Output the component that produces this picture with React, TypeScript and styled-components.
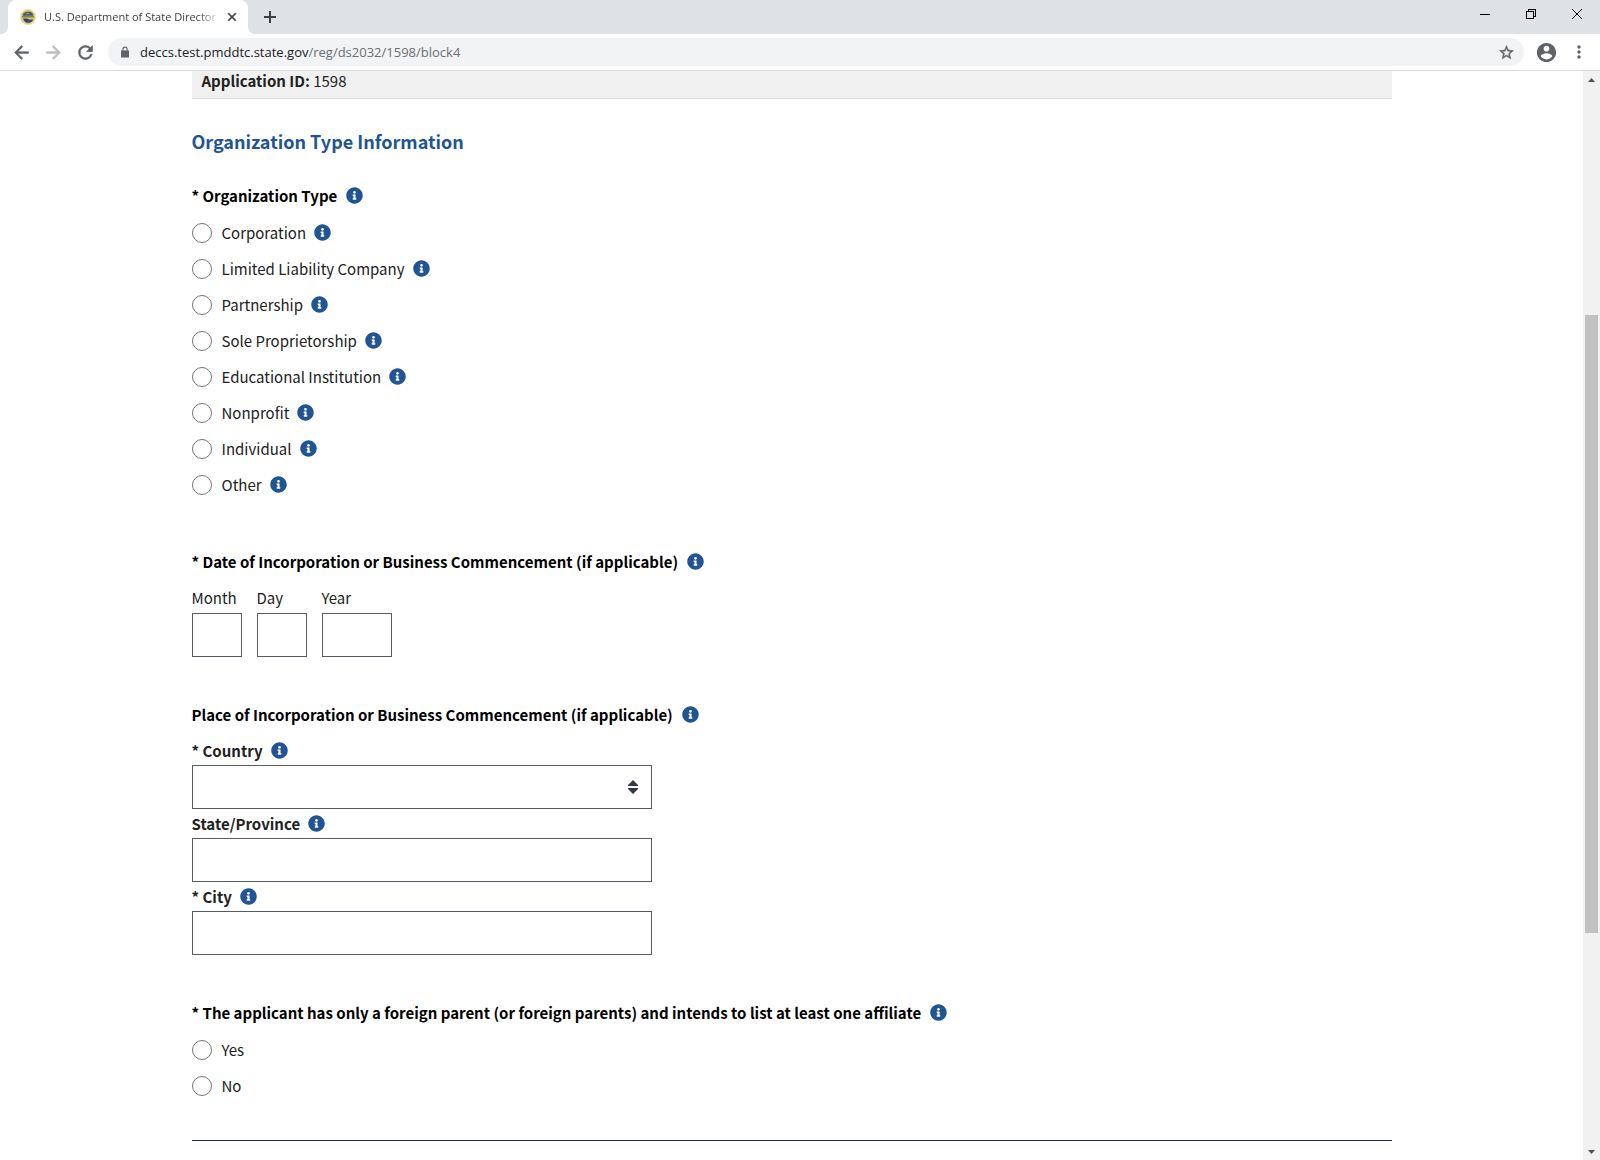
import React from "react";
import styled, { createGlobalStyle } from "styled-components";
import {
  MdArrowBack,
  MdArrowForward,
  MdRefresh,
  MdStarBorder,
  MdMoreVert,
  MdClose,
} from "react-icons/md";
import { FaInfoCircle } from "react-icons/fa";

const bodyFont = '"Noto Sans CJK SC", "Noto Sans", sans-serif';
const chromeFont = '"Open Sans", "Noto Sans", sans-serif';

const GlobalStyle = createGlobalStyle`
  *, *::before, *::after { box-sizing: border-box; }
  body { margin: 0; background: #fff; }
  button, input, select { font: inherit; color: inherit; }
`;

/* ---------- browser frame ---------- */

const Window = styled.div`
  display: flex;
  flex-direction: column;
  height: 100vh;
  font-family: ${bodyFont};
  font-size: 15px;
  line-height: 24px;
  color: #212121;
  overflow: hidden;
`;

const TabStrip = styled.header`
  display: flex;
  align-items: stretch;
  flex: none;
  height: 34px;
  padding-left: 8px;
  background: #dee1e6;
  font-family: ${chromeFont};
`;

const Tab = styled.div`
  position: relative;
  display: flex;
  align-items: center;
  width: 240px;
  padding: 0 8px 0 12px;
  border-radius: 8px 8px 0 0;
  background: #fff;

  &::before,
  &::after {
    content: "";
    position: absolute;
    bottom: 0;
    width: 8px;
    height: 8px;
  }
  &::before {
    left: -8px;
    background: radial-gradient(circle at 0 0, transparent 8px, #fff 8px);
  }
  &::after {
    right: -8px;
    background: radial-gradient(circle at 100% 0, transparent 8px, #fff 8px);
  }
`;

const TabTitle = styled.span`
  flex: 1;
  min-width: 0;
  margin: 0 4px 0 8px;
  overflow: hidden;
  white-space: nowrap;
  font-size: 11px;
  line-height: 16px;
  color: #3c4043;
  mask-image: linear-gradient(to right, #000 88%, transparent 100%);
`;

const IconButton = styled.button<{ $width: number; $color?: string }>`
  display: flex;
  align-items: center;
  justify-content: center;
  flex: none;
  width: ${(p) => p.$width}px;
  padding: 0;
  border: 0;
  background: none;
  color: ${(p) => p.$color ?? "#5f6368"};

  path[fill="none"] {
    stroke: none;
  }
`;

const NewTab = styled(IconButton)`
  margin-left: 8px;
`;

const WindowControls = styled.div`
  display: flex;
  height: 28px;
  margin-left: auto;
`;

const Toolbar = styled.nav`
  display: flex;
  align-items: stretch;
  flex: none;
  height: 37px;
  padding: 4px 5px;
  border-bottom: 1px solid #dcdcdc;
  background: #fff;
`;

const NavButton = styled(IconButton)`
  svg {
    stroke: currentColor;
    stroke-width: 0.6px;
  }
`;

const AddressBar = styled.div`
  display: flex;
  align-items: center;
  flex: 1;
  min-width: 0;
  height: 28px;
  margin: 0 5px 0 7px;
  padding: 0 8px 0 13px;
  border-radius: 14px;
  background: #f1f3f4;
  color: #5f6368;
  font-family: ${chromeFont};
`;

const Address = styled.span`
  flex: 1;
  margin-left: 11px;
  font-size: 13px;
  line-height: 20px;
  color: #6b6f73;
`;

const Host = styled.span`
  color: #202124;
`;

const Viewport = styled.div`
  display: flex;
  flex: 1;
  min-height: 0;
`;

const Scrollbar = styled.div`
  display: grid;
  grid-template-rows: 17px 227fr 618fr 210fr 17px;
  flex: none;
  width: 17px;
  background: #f1f1f1;
`;

const Thumb = styled.div`
  grid-row: 3;
  margin: 0 2px;
  background: #c1c1c1;
`;

const ScrollArrow = styled(IconButton)<{ $row: number }>`
  grid-row: ${(p) => p.$row};
`;

/* ---------- page ---------- */

const Page = styled.main`
  flex: 1;
  min-width: 0;
  overflow: hidden;
`;

const Content = styled.div`
  max-width: 1200px;
  margin: 0 auto;
`;

const ApplicationBar = styled.div`
  padding: 0 10px 7px;
  border-bottom: 1px solid #dcdee0;
  background: #f0f0f0;
  line-height: 20px;
`;

const Title = styled.h1`
  margin: 28px 0 0;
  font-size: 18px;
  line-height: 28px;
  font-weight: 700;
  color: #205493;
`;

const Form = styled.form`
  display: flex;
  flex-direction: column;
  gap: 46px;
  margin-top: 29px;
  padding-bottom: 35px;
  border-bottom: 1px solid #112e51;
`;

const Group = styled.fieldset`
  min-width: 0;
  margin: 0;
  padding: 0;
  border: 0;
`;

const Legend = styled.legend`
  display: flex;
  align-items: center;
  gap: 9px;
  padding: 0;
  font-weight: 700;
  color: #000;
`;

const InfoButton = styled.button`
  display: flex;
  padding: 0 0 2px;
  border: 0;
  background: none;
  color: #205493;
  font-size: 17px;
`;

const RadioList = styled.div`
  padding: 7px 0 1px;
`;

const RadioRow = styled.div`
  display: flex;
  align-items: center;
  gap: 8px;
  height: 36px;
`;

const RadioLabel = styled.label`
  display: flex;
  align-items: center;
  gap: 10px;
`;

const Radio = styled.input`
  appearance: none;
  width: 20px;
  height: 20px;
  margin: 0;
  border: 1px solid #757575;
  border-radius: 50%;
  background: #fff;

  &:checked {
    background: #205493;
    box-shadow: inset 0 0 0 3px #fff;
  }
`;

const Fields = styled.div`
  display: flex;
  padding-top: 12px;
`;

const DateFields = styled(Fields)`
  gap: 15px;
`;

const PlaceFields = styled(Fields)`
  flex-direction: column;
  gap: 3px;
  max-width: 460px;
`;

const DateLabel = styled.label`
  display: flex;
  flex-direction: column;
  gap: 3px;
`;

const LabelRow = styled.div`
  display: flex;
  align-items: center;
  gap: 8px;
  margin-bottom: 2px;
  font-weight: 700;
`;

const TextInput = styled.input<{ $width?: number }>`
  display: block;
  width: ${(p) => (p.$width ? `${p.$width}px` : "100%")};
  height: 44px;
  padding: 0 8px;
  border: 1px solid #565c65;
  border-radius: 0;
  background: #fff;
`;

const SelectBox = styled.div`
  position: relative;
`;

const Select = styled.select`
  display: block;
  appearance: none;
  width: 100%;
  height: 44px;
  padding: 0 40px 0 8px;
  border: 1px solid #565c65;
  border-radius: 0;
  background: #fff;
`;

const SelectArrows = styled.svg`
  position: absolute;
  top: 15px;
  right: 14px;
  pointer-events: none;
`;

/* ---------- parts ---------- */

function Info({ about }: { about: string }) {
  return (
    <InfoButton type="button" aria-label={`About ${about}`}>
      <FaInfoCircle />
    </InfoButton>
  );
}

function GroupLegend({ text, required }: { text: string; required?: boolean }) {
  return (
    <Legend>
      <span>{required ? `* ${text}` : text}</span>
      <Info about={text} />
    </Legend>
  );
}

function RadioOption({ name, text, info }: { name: string; text: string; info?: boolean }) {
  return (
    <RadioRow>
      <RadioLabel>
        <Radio type="radio" name={name} value={text} />
        {text}
      </RadioLabel>
      {info && <Info about={text} />}
    </RadioRow>
  );
}

function FieldHeading({ id, text, required }: { id: string; text: string; required?: boolean }) {
  return (
    <LabelRow>
      <label htmlFor={id}>{required ? `* ${text}` : text}</label>
      <Info about={text} />
    </LabelRow>
  );
}

function Seal() {
  return (
    <svg width="16" height="16" viewBox="0 0 16 16" aria-hidden="true">
      <circle cx="8" cy="8" r="8" fill="#ebe2a8" />
      <circle cx="8" cy="8" r="7" fill="#d9c95e" />
      <path d="M3.500 4.500 6 2.800h4.500L12.500 4.500l1 2.200h-11z" fill="#4a5478" />
      <path d="M2 7.200h12v1.200H2z" fill="#6d6c62" />
      <path d="M3 9.500h4.500l1 .9h4.700L12 12.500l-2.500 1.300H6.500L4.200 12z" fill="#34447c" />
      <path d="M6 4h3.500v1.200H6z" fill="#9a9670" />
    </svg>
  );
}

const organizationTypes = [
  "Corporation",
  "Limited Liability Company",
  "Partnership",
  "Sole Proprietorship",
  "Educational Institution",
  "Nonprofit",
  "Individual",
  "Other",
];

const dateParts = [
  { label: "Month", width: 50 },
  { label: "Day", width: 50 },
  { label: "Year", width: 70 },
];

export default function App() {
  return (
    <>
      <GlobalStyle />
      <Window>
        <TabStrip>
          <Tab>
            <Seal />
            <TabTitle>U.S. Department of State Director</TabTitle>
            <IconButton $width={16} $color="#3c4043" aria-label="Close tab">
              <MdClose size={14} stroke="currentColor" strokeWidth={1} />
            </IconButton>
          </Tab>
          <NewTab $width={28} $color="#3c4043" aria-label="New tab">
            <svg width="12" height="12" viewBox="0 0 12 12" shapeRendering="crispEdges">
              <path d="M6 0v12M0 6h12" stroke="currentColor" strokeWidth="2" />
            </svg>
          </NewTab>
          <WindowControls>
            <IconButton $width={46} $color="#000" aria-label="Minimize">
              <svg width="10" height="10" viewBox="0 0 10 10" shapeRendering="crispEdges">
                <path d="M0 5.500h10" stroke="currentColor" />
              </svg>
            </IconButton>
            <IconButton $width={46} $color="#000" aria-label="Restore">
              <svg width="10" height="10" viewBox="0 0 10 10" fill="none" shapeRendering="crispEdges">
                <path d="M.5 2.500h7v7h-7zM2.500 2.500v-2h7v7h-2" stroke="currentColor" />
              </svg>
            </IconButton>
            <IconButton $width={46} $color="#000" aria-label="Close">
              <svg width="10" height="10" viewBox="0 0 10 10">
                <path d="M0 0l10 10M10 0 0 10" stroke="currentColor" />
              </svg>
            </IconButton>
          </WindowControls>
        </TabStrip>

        <Toolbar>
          <NavButton $width={32} aria-label="Back">
            <MdArrowBack size={21} />
          </NavButton>
          <NavButton $width={32} $color="#babcbe" aria-label="Forward">
            <MdArrowForward size={21} />
          </NavButton>
          <NavButton $width={32} aria-label="Reload">
            <MdRefresh size={21} />
          </NavButton>
          <AddressBar>
            <svg width="8" height="12" viewBox="0 0 8 12" fill="currentColor" aria-hidden="true">
              <path d="M0 4.500h8V11.500H0z" />
              <path d="M1.400 5V3.200a2.600 2.600 0 0 1 5.200 0V5H5.400V3.200a1.400 1.400 0 0 0-2.800 0V5z" />
            </svg>
            <Address>
              <Host>deccs.test.pmddtc.state.gov</Host>/reg/ds2032/1598/block4
            </Address>
            <NavButton $width={20} aria-label="Bookmark">
              <MdStarBorder size={17} />
            </NavButton>
          </AddressBar>
          <IconButton $width={34} aria-label="Profile">
            <svg width="23" height="23" viewBox="0 0 24 24" fill="currentColor">
              <path d="M12 2C6.480 2 2 6.480 2 12s4.480 10 10 10 10-4.480 10-10S17.520 2 12 2zm0 3c1.660 0 3 1.340 3 3s-1.340 3-3 3-3-1.340-3-3 1.340-3 3-3zm0 14.200c-2.500 0-4.710-1.280-6-3.220.03-1.990 4-3.080 6-3.080 1.990 0 5.970 1.090 6 3.080-1.290 1.940-3.500 3.220-6 3.220z" />
            </svg>
          </IconButton>
          <IconButton $width={32} aria-label="Menu">
            <MdMoreVert size={20} />
          </IconButton>
        </Toolbar>

        <Viewport>
          <Page>
            <Content>
              <ApplicationBar>
                <strong>Application ID:</strong> 1598
              </ApplicationBar>
              <Title>Organization Type Information</Title>

              <Form>
                <Group>
                  <GroupLegend text="Organization Type" required />
                  <RadioList>
                    {organizationTypes.map((type) => (
                      <RadioOption key={type} name="organizationType" text={type} info />
                    ))}
                  </RadioList>
                </Group>

                <Group>
                  <GroupLegend
                    text="Date of Incorporation or Business Commencement (if applicable)"
                    required
                  />
                  <DateFields>
                    {dateParts.map(({ label, width }) => (
                      <DateLabel key={label}>
                        {label}
                        <TextInput $width={width} />
                      </DateLabel>
                    ))}
                  </DateFields>
                </Group>

                <Group>
                  <GroupLegend text="Place of Incorporation or Business Commencement (if applicable)" />
                  <PlaceFields>
                    <div>
                      <FieldHeading id="country" text="Country" required />
                      <SelectBox>
                        <Select id="country">
                          <option value=""></option>
                        </Select>
                        <SelectArrows width="10" height="14" viewBox="0 0 10 14" fill="#323a45">
                          <path d="M5 0l5 5v1H0V5zM0 8h10v1l-5 5-5-5z" />
                        </SelectArrows>
                      </SelectBox>
                    </div>
                    <div>
                      <FieldHeading id="state" text="State/Province" />
                      <TextInput id="state" />
                    </div>
                    <div>
                      <FieldHeading id="city" text="City" required />
                      <TextInput id="city" />
                    </div>
                  </PlaceFields>
                </Group>

                <Group>
                  <GroupLegend
                    text="The applicant has only a foreign parent (or foreign parents) and intends to list at least one affiliate"
                    required
                  />
                  <RadioList>
                    <RadioOption name="foreignParent" text="Yes" />
                    <RadioOption name="foreignParent" text="No" />
                  </RadioList>
                </Group>
              </Form>
            </Content>
          </Page>

          <Scrollbar>
            <ScrollArrow $row={1} $width={17} $color="#505050" aria-label="Scroll up">
              <svg width="7" height="4" viewBox="0 0 7 4" fill="currentColor">
                <path d="M3.500 0 7 4H0z" />
              </svg>
            </ScrollArrow>
            <Thumb />
            <ScrollArrow $row={5} $width={17} $color="#505050" aria-label="Scroll down">
              <svg width="7" height="4" viewBox="0 0 7 4" fill="currentColor">
                <path d="M0 0h7L3.500 4z" />
              </svg>
            </ScrollArrow>
          </Scrollbar>
        </Viewport>
      </Window>
    </>
  );
}
